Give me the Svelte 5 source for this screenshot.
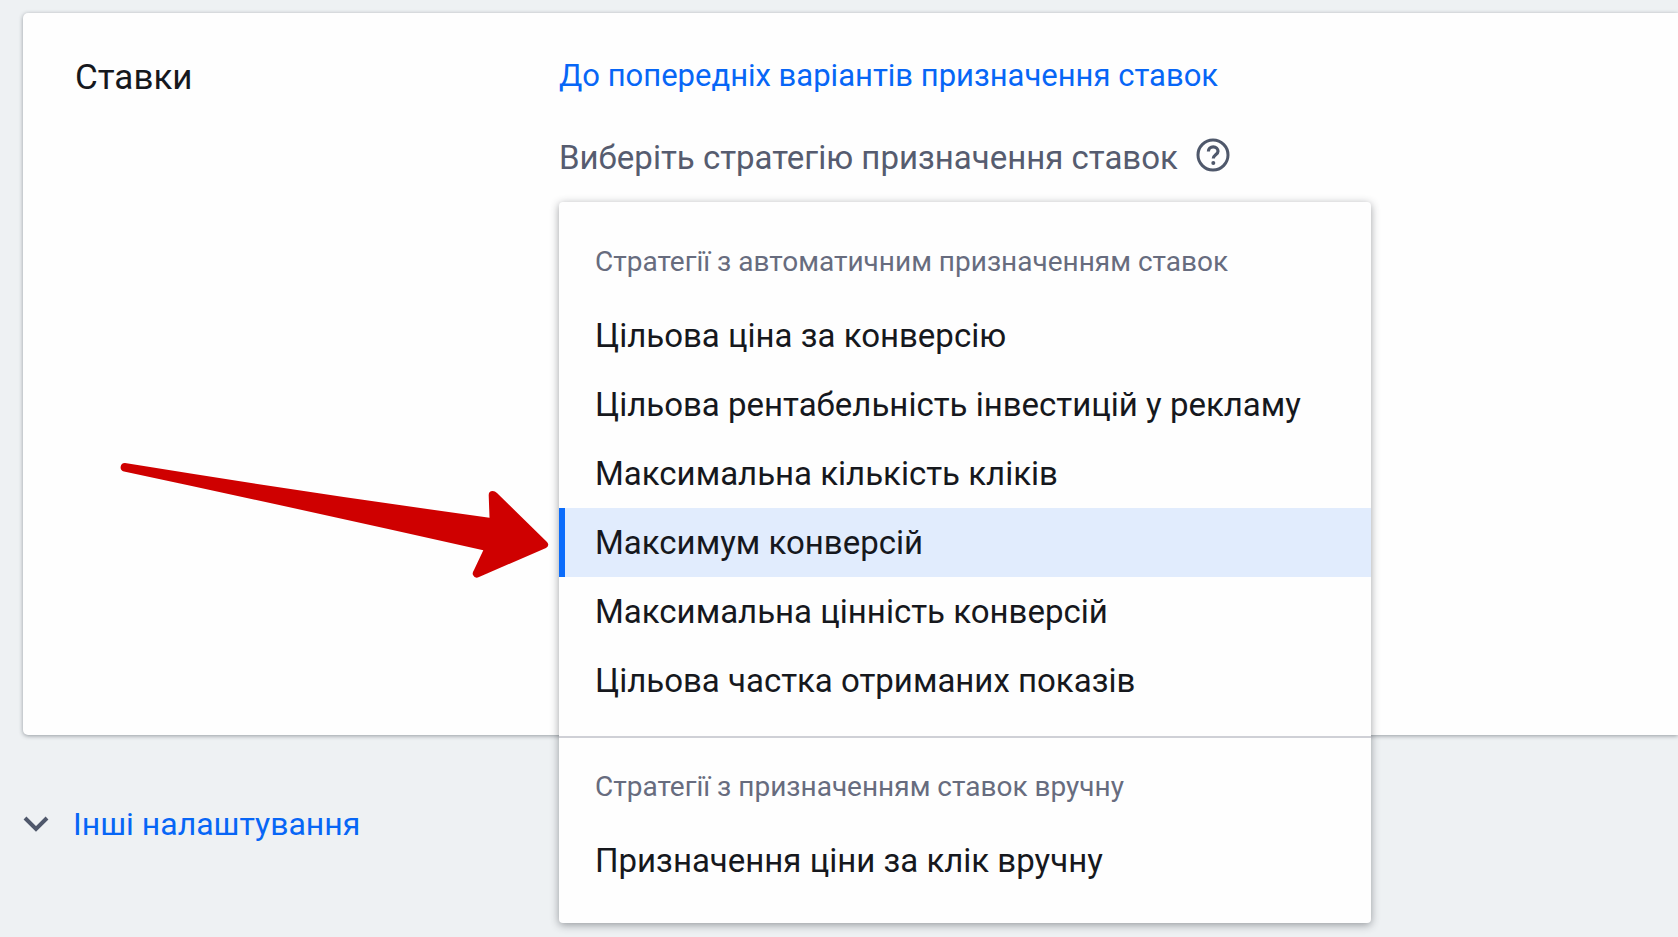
<script lang="ts">
    type Strategy = { id: string; label: string };
    type Group = { title: string; items: Strategy[] };

    const groups: Group[] = [
        {
            title: 'Стратегії з автоматичним призначенням ставок',
            items: [
                { id: 'target-cpa', label: 'Цільова ціна за конверсію' },
                { id: 'target-roas', label: 'Цільова рентабельність інвестицій у рекламу' },
                { id: 'max-clicks', label: 'Максимальна кількість кліків' },
                { id: 'max-conversions', label: 'Максимум конверсій' },
                { id: 'max-value', label: 'Максимальна цінність конверсій' },
                { id: 'impression-share', label: 'Цільова частка отриманих показів' }
            ]
        },
        {
            title: 'Стратегії з призначенням ставок вручну',
            items: [{ id: 'manual-cpc', label: 'Призначення ціни за клік вручну' }]
        }
    ];

    let selected = $state('max-conversions');
</script>

<main class="page">
    <section class="card">
        <h2 class="card-title">Ставки</h2>

        <div class="card-body">
            <a class="link" href="#previous">До попередніх варіантів призначення ставок</a>

            <div class="field">
                <div class="field-label">
                    <span id="strategy-label">Виберіть стратегію призначення ставок</span>
                    <button class="help" type="button" aria-label="Довідка">
                        <svg width="36" height="36" viewBox="0 0 36 36" fill="none">
                            <circle cx="17" cy="17" r="15" stroke="currentColor" stroke-width="3" />
                            <path d="M12.400 13.500c0-2.800 2-4.600 4.800-4.600s4.800 1.700 4.800 4.300c0 3.600-4.700 3.700-4.700 7.400" stroke="currentColor" stroke-width="3.200" />
                            <circle cx="17.300" cy="25" r="2" fill="currentColor" />
                        </svg>
                    </button>
                </div>

                <div class="menu" role="listbox" aria-labelledby="strategy-label">
                    {#each groups as group}
                        <div class="group" role="group" aria-label={group.title}>
                            <div class="group-title">{group.title}</div>
                            {#each group.items as item}
                                <button
                                    class="option"
                                    class:selected={selected === item.id}
                                    type="button"
                                    role="option"
                                    aria-selected={selected === item.id}
                                    onclick={() => (selected = item.id)}
                                >
                                    {item.label}
                                </button>
                            {/each}
                        </div>
                    {/each}
                </div>
            </div>
        </div>

        <!-- Pointer to the recommended option -->
        <svg class="arrow" width="430" height="90" viewBox="0 0 430 90" aria-hidden="true">
            <path
                d="M5 2 Q190 32 369.500 56.700 L368.700 34 Q368.700 30 372.700 30 Q375 30 377 32 L427 81 Q430 84.500 426 87 L359 116 Q355 118 353 114 Q352 112 354 109 L363.300 89.300 Q180 48 4 10.500 A4.300 4.300 0 0 1 5 2 Z"
                fill="#cf0000"
            />
        </svg>
    </section>

    <button class="more" type="button">
        <svg width="28" height="20" viewBox="0 0 28 20" fill="none">
            <path d="M2 4l11 11L24 4" stroke="#4f586b" stroke-width="4" />
        </svg>
        Інші налаштування
    </button>
</main>

<style>
    :global(body) {
        margin: 0;
        background: #eef1f3;
    }

    .page {
        box-sizing: border-box;
        min-height: 100vh;
        padding: 13px 0 0 23px;
        overflow: hidden;
        font-family: Roboto, "Liberation Sans", sans-serif;
        font-size: 33px;
        line-height: 40px;
        color: #16181d;
    }

    button {
        padding: 0;
        border: 0;
        background: none;
        font: inherit;
        color: inherit;
        cursor: pointer;
    }

    .card {
        position: relative;
        display: flex;
        box-sizing: border-box;
        min-height: 722px;
        padding: 43px 0 0 52px;
        border-radius: 5px 0 0 5px;
        background: #fefefe;
        box-shadow: 0 1px 4px rgba(40, 50, 60, 0.45);
    }

    .card-title {
        flex: 0 0 484px;
        margin: 0;
        padding-top: 2px;
        font-size: 35px;
        font-weight: 400;
    }

    .card-body {
        display: flex;
        flex: 1;
        flex-direction: column;
        align-items: flex-start;
        gap: 42px;
    }

    .link {
        font-size: 31px;
        color: #0766f6;
        text-decoration: none;
    }

    .field {
        position: relative;
        width: 812px;
    }

    .field-label {
        display: flex;
        align-items: flex-start;
        gap: 18px;
        color: #565c6f;
    }

    .help {
        display: flex;
        color: #4f586b;
    }

    .menu {
        position: absolute;
        top: 64px;
        left: 0;
        z-index: 1;
        width: 100%;
        border-radius: 4px;
        background: #fefefe;
        box-shadow: 0 2px 8px rgba(40, 45, 50, 0.45);
    }

    .group {
        padding: 30px 0 21px;
    }

    .group + .group {
        padding: 19px 0 28px;
        border-top: 2px solid #cfd0d6;
    }

    .group-title {
        padding: 10px 36px 19px;
        font-size: 28px;
        color: #676c7e;
    }

    .option {
        display: block;
        box-sizing: border-box;
        width: 100%;
        height: 69px;
        padding: 0 36px;
        text-align: left;
    }

    .option.selected {
        background: #e1ecfd;
        box-shadow: inset 6px 0 #0b6cfb;
    }

    .arrow {
        position: absolute;
        top: 448px;
        left: 97px;
        overflow: visible;
    }

    .more {
        display: flex;
        align-items: center;
        gap: 22px;
        margin-top: 69px;
        font-size: 32px;
        color: #0766f6;
    }
</style>
